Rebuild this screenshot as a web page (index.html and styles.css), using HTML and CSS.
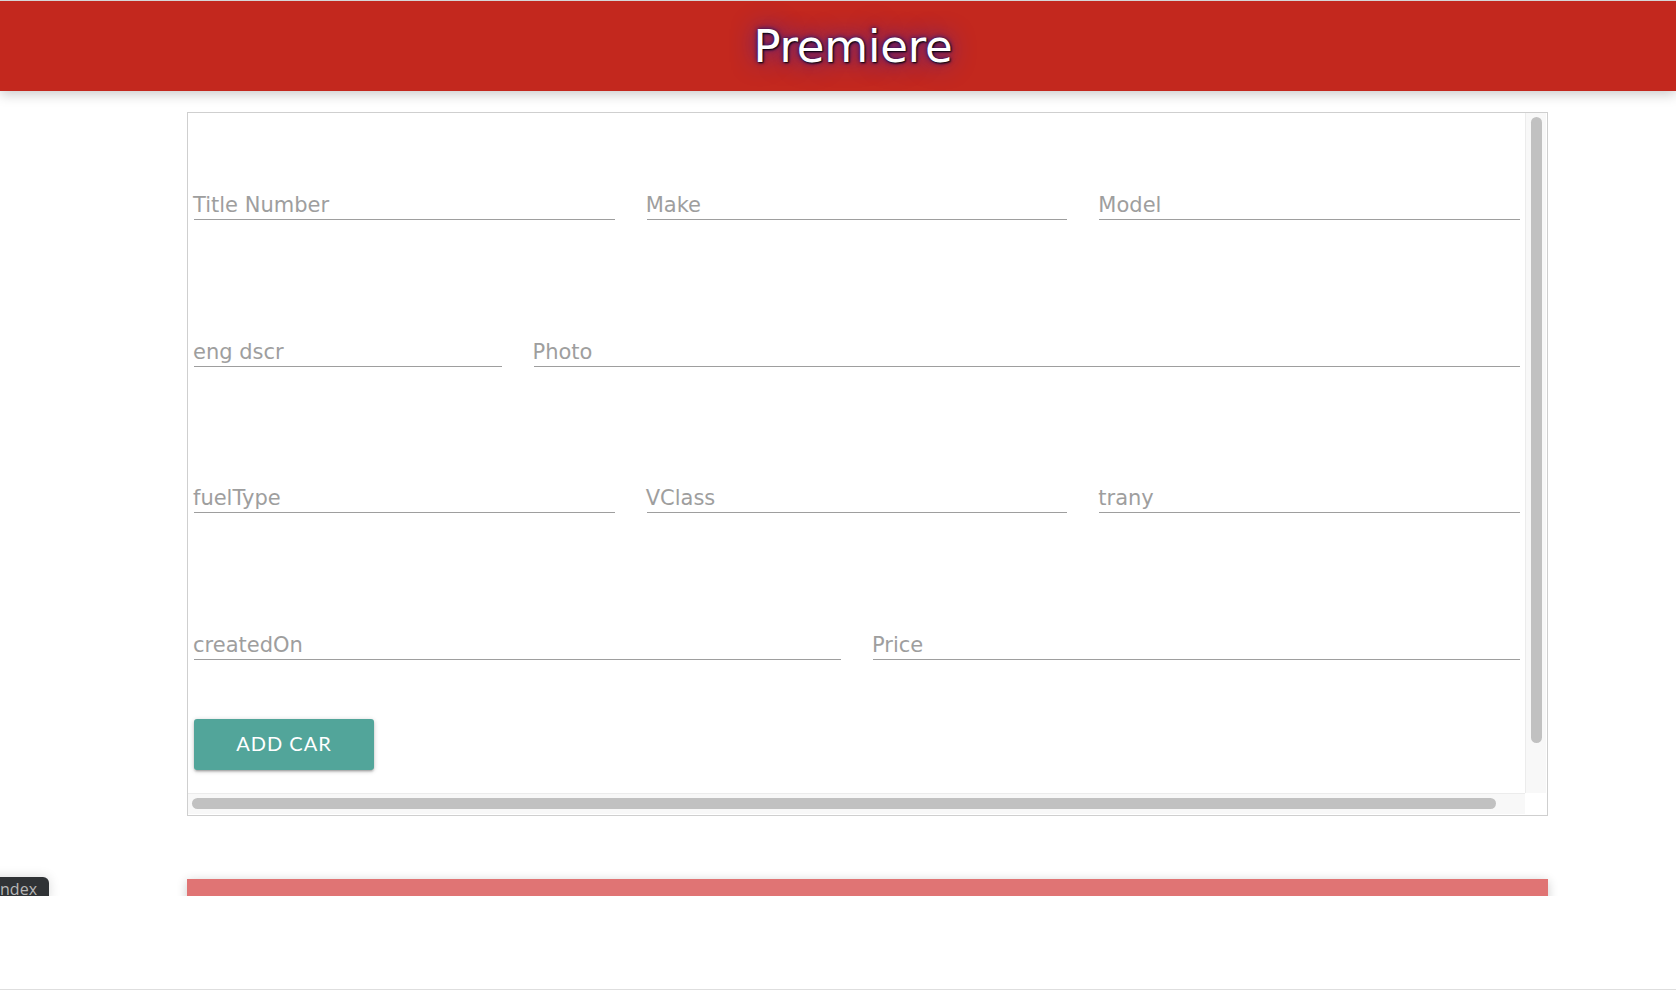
FILE: index.html
```html
<!DOCTYPE html>
<html>
<head>
<meta charset="utf-8">
<title>Premiere</title>
<link rel="stylesheet" href="styles.css">
</head>
<body>
<div class="viewport">
  <header class="topbar">
    <h1 class="brand">Premiere</h1>
  </header>
  <main class="main">
    <section class="panel">
      <div class="panel-body">
        <div class="scroll-content">
          <form class="car-form">
            <div class="form-row">
              <div class="field span-4"><span class="label">Title Number</span></div>
              <div class="field span-4"><span class="label">Make</span></div>
              <div class="field span-4"><span class="label">Model</span></div>
            </div>
            <div class="form-row">
              <div class="field span-3"><span class="label">eng dscr</span></div>
              <div class="field span-9"><span class="label">Photo</span></div>
            </div>
            <div class="form-row">
              <div class="field span-4"><span class="label">fuelType</span></div>
              <div class="field span-4"><span class="label">VClass</span></div>
              <div class="field span-4"><span class="label">trany</span></div>
            </div>
            <div class="form-row">
              <div class="field span-6"><span class="label">createdOn</span></div>
              <div class="field span-6"><span class="label">Price</span></div>
            </div>
          </form>
          <button class="btn" type="button">ADD CAR</button>
        </div>
        <div class="vscroll"><div class="vthumb"></div></div>
        <div class="hscroll"><div class="hthumb"></div></div>
        <div class="corner"></div>
      </div>
    </section>
    <div class="footer-bar"></div>
  </main>
  <div class="route-tag">index</div>
</div>
<div class="below"></div>
</body>
</html>
```

FILE: styles.css
```css
html, body {
  margin: 0;
  padding: 0;
  background: #ffffff;
}
body {
  font-family: "DejaVu Sans", Verdana, sans-serif;
  border-top: 1px solid #d6d6d6;
}
.viewport {
  height: 895px;
  overflow: hidden;
  position: relative;
}
.topbar {
  height: 90px;
  background: #c3281e;
  box-shadow: 0 3px 12px rgba(0, 0, 0, 0.22);
  display: flex;
  align-items: center;
  justify-content: center;
  padding-left: 30px;
  position: relative;
  z-index: 2;
}
.brand {
  margin: 0;
  font-family: "DejaVu Sans", Verdana, sans-serif;
  font-weight: normal;
  font-size: 45px;
  color: #ffffff;
  letter-spacing: -0.2px;
  line-height: 1;
  padding-top: 1px;
  text-shadow: 1px 1px 2px #000000, 0 0 25px #2020c0, 0 0 5px #101070;
}
.main {
  padding-top: 21px;
  padding-left: 187px;
}
.panel {
  width: 1361px;
  height: 704px;
  box-sizing: border-box;
  border: 1px solid #cfcfcf;
  background: #ffffff;
}
.panel-body {
  display: grid;
  grid-template-columns: 1337px 21px;
  grid-template-rows: 680px 21px;
  height: 100%;
}
.scroll-content {
  overflow: hidden;
  padding-left: 6px;
}
.car-form {
  display: flex;
  flex-direction: column;
  gap: 99.5px;
  padding-top: 60px;
  width: 1326px;
}
.form-row {
  display: grid;
  grid-template-columns: repeat(12, 1fr);
  column-gap: 32px;
}
.field {
  height: 47px;
  box-sizing: border-box;
  border-bottom: 1px solid #9e9e9e;
  display: flex;
  align-items: flex-end;
  padding-bottom: 2px;
}
.span-3 { grid-column: span 3; }
.span-4 { grid-column: span 4; }
.span-6 { grid-column: span 6; }
.span-9 { grid-column: span 9; }
.label {
  font-size: 21px;
  line-height: 24px;
  color: #9e9e9e;
  margin-left: -1px;
}
.btn {
  display: block;
  margin-top: 59px;
  width: 180px;
  height: 51px;
  border: none;
  border-radius: 3px;
  background: #52a59a;
  color: #ffffff;
  font-family: Lato, "Open Sans", sans-serif;
  font-size: 20px;
  letter-spacing: 1px;
  padding: 0 0 2px 0;
  box-shadow: 0 2px 2px rgba(0, 0, 0, 0.14), 0 3px 1px -2px rgba(0, 0, 0, 0.12), 0 1px 5px rgba(0, 0, 0, 0.2);
}
.vscroll {
  background: #f8f8f8;
  border-left: 1px solid #ececec;
  padding: 4px 4px 0 5px;
  box-sizing: border-box;
}
.vthumb {
  height: 626px;
  background: #c1c1c1;
  border-radius: 6px;
}
.hscroll {
  background: #f8f8f8;
  border-top: 1px solid #ececec;
  padding: 4px 0 0 4px;
  box-sizing: border-box;
}
.hthumb {
  width: 1304px;
  height: 11px;
  background: #c1c1c1;
  border-radius: 6px;
}
.corner {
  background: #ffffff;
}
.footer-bar {
  margin-top: 63px;
  width: 1361px;
  height: 40px;
  background: #e07474;
  box-shadow: 0 2px 10px rgba(0, 0, 0, 0.2);
}
.route-tag {
  position: absolute;
  left: -14px;
  top: 876px;
  height: 26px;
  padding: 0 12px 0 10px;
  border-radius: 6px;
  background: #303336;
  color: #b8b8b8;
  font-family: "Open Sans", sans-serif;
  font-size: 16px;
  line-height: 24px;
  box-shadow: 0 0 12px rgba(0, 0, 0, 0.15);
}
.below {
  height: 93px;
  border-bottom: 1px solid #dedede;
}
```
